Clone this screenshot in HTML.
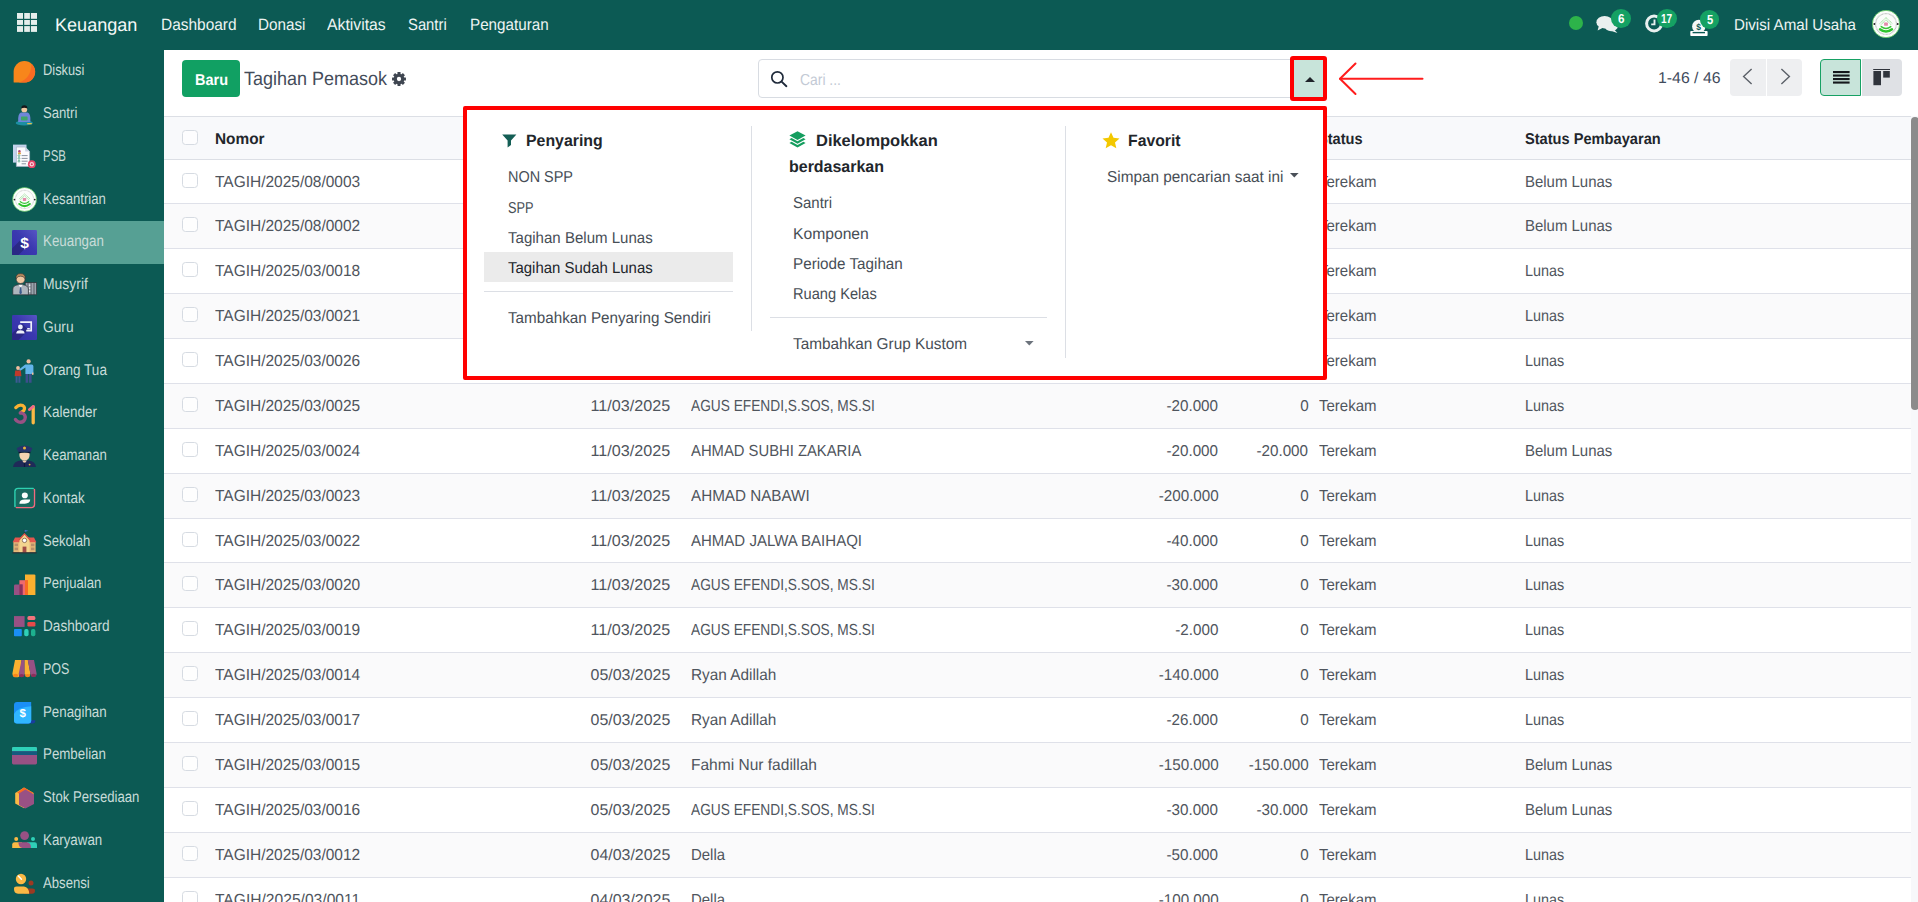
<!DOCTYPE html>
<html lang="id">
<head>
<meta charset="utf-8">
<title>Tagihan Pemasok</title>
<style>
*{box-sizing:border-box;margin:0;padding:0}
html,body{width:1918px;height:902px;overflow:hidden;background:#fff}
body{font-family:"Liberation Sans",sans-serif;font-size:15px;color:#4a5058;position:relative}
.a,.t,svg{position:absolute}
.t{white-space:nowrap;line-height:24px;text-rendering:geometricPrecision}
.badge{position:absolute;width:19.7px;height:18.7px;border-radius:50%;background:#15a163}
.cb{position:absolute;left:182.2px;width:15.8px;height:14.8px;border:1px solid #d6dbe2;border-radius:3.5px;background:rgba(255,255,255,.7)}
.r{position:absolute;left:164px;width:1747px;height:44.875px;border-bottom:1px solid #dfe1e9}
.r.g{background:#fafafb}
.vl{position:absolute;width:1px;background:#dcdfe5}
.hl{position:absolute;height:1px;background:#dcdfe5}
.sv{left:12px;width:25px;height:25px;overflow:visible}
</style>
</head>
<body>
<div class="a" id="nav" style="left:0;top:0;width:1918px;height:50px;background:#0c5a54"></div>
<svg style="left:17.3px;top:13.1px" width="21" height="19" viewBox="0 0 21 19"><g fill="#e6eeec"><rect x="0" y="0" width="6.0" height="5.8"/><rect x="7.2" y="0" width="5.7" height="5.8"/><rect x="13.9" y="0" width="6.1" height="5.8"/><rect x="0" y="7.0" width="6.0" height="4.9"/><rect x="7.2" y="7.0" width="5.7" height="4.9"/><rect x="13.9" y="7.0" width="6.1" height="4.9"/><rect x="0" y="13.1" width="6.0" height="5.8"/><rect x="7.2" y="13.1" width="5.7" height="5.8"/><rect x="13.9" y="13.1" width="6.1" height="5.8"/></g></svg>
<div class="t" style="left:54.90px;top:13.00px;font-size:18.26px;color:#f4f8f7;transform:scaleX(0.9900);transform-origin:0 50%;">Keuangan</div>
<div class="t" style="left:160.60px;top:13.00px;font-size:16.38px;color:#eef4f3;transform:scaleX(0.9444);transform-origin:0 50%;">Dashboard</div>
<div class="t" style="left:258.30px;top:13.00px;font-size:16.38px;color:#eef4f3;transform:scaleX(0.9325);transform-origin:0 50%;">Donasi</div>
<div class="t" style="left:327.30px;top:13.00px;font-size:16.38px;color:#eef4f3;transform:scaleX(0.9635);transform-origin:0 50%;">Aktivitas</div>
<div class="t" style="left:408.30px;top:13.00px;font-size:16.38px;color:#eef4f3;transform:scaleX(0.9053);transform-origin:0 50%;">Santri</div>
<div class="t" style="left:470.30px;top:13.00px;font-size:16.38px;color:#eef4f3;transform:scaleX(0.9303);transform-origin:0 50%;">Pengaturan</div>
<div class="a" style="left:1569px;top:16px;width:14px;height:14px;border-radius:7px;background:#2db34a"></div>
<svg style="left:1596px;top:15px" width="23" height="19" viewBox="0 0 23 19"><g fill="#e9f0ef"><ellipse cx="8.6" cy="7.2" rx="8.2" ry="6.2"/><path d="M3 10.5 L1.6 15.6 L7.4 12.6 Z"/><ellipse cx="15.2" cy="11.6" rx="6.6" ry="4.6"/><path d="M18.2 14.6 L21.4 18 L15.4 15.9 Z"/></g></svg>
<div class="badge" style="left:1611.1px;top:9.4px"></div>
<div class="t" style="left:1617.50px;top:7.00px;font-size:13.04px;font-weight:700;color:#fff;transform:scaleX(0.8966);transform-origin:0 50%;">6</div>
<svg style="left:1645.3px;top:14px" width="19" height="19" viewBox="0 0 19 19"><circle cx="9.1" cy="9.5" r="7.5" fill="none" stroke="#e9f0ef" stroke-width="3"/><path d="M9.5 5.4 V10.4 H6.2" fill="none" stroke="#e9f0ef" stroke-width="1.9"/></svg>
<div class="badge" style="left:1657.3px;top:9.4px"></div>
<div class="t" style="left:1661.00px;top:7.00px;font-size:13.04px;font-weight:700;color:#fff;transform:scaleX(0.7724);transform-origin:0 50%;">17</div>
<svg style="left:1690px;top:19px" width="18" height="18" viewBox="0 0 18 18"><circle cx="8.8" cy="7.4" r="6.7" fill="#f4f8f7"/><rect x="0.3" y="12" width="17.3" height="5" rx="0.8" fill="#ffffff"/><rect x="2.6" y="12.9" width="12.4" height="1.4" fill="#0c5a54"/><text x="8.6" y="10.6" font-family="Liberation Sans" font-size="8.5" font-weight="700" fill="#0c5a54" text-anchor="middle">$</text></svg>
<div class="badge" style="left:1699.8px;top:10.2px"></div>
<div class="t" style="left:1706.60px;top:8.00px;font-size:13.04px;font-weight:700;color:#fff;transform:scaleX(0.8552);transform-origin:0 50%;">5</div>
<div class="t" style="left:1734.40px;top:14.00px;font-size:15.80px;color:#eef4f3;transform:scaleX(0.9584);transform-origin:0 50%;">Divisi Amal Usaha</div>
<svg style="left:1871.6px;top:9.8px" width="28" height="28" viewBox="0 0 28 28"><circle cx="14" cy="14" r="13.7" fill="#fbfdfb" stroke="#43bf43" stroke-width="0.7"/><circle cx="14" cy="14" r="10.4" fill="none" stroke="#bfc3c3" stroke-width="1.3" stroke-dasharray="0.9 0.5"/><path d="M7.6 13.6 L14 7.6 L20.4 13.6" fill="none" stroke="#7ed67e" stroke-width="0.9" stroke-dasharray="1.2 0.6"/><path d="M8.6 15 L14 9.8 L19.4 15" fill="none" stroke="#7ed67e" stroke-width="0.9" stroke-dasharray="1.2 0.6"/><rect x="12.1" y="12.4" width="3.8" height="3.4" rx="0.5" fill="#e48bab"/><path d="M9.2 16.6 Q14 20.4 18.8 16.6" fill="none" stroke="#36c636" stroke-width="1.5" stroke-linecap="round"/><path d="M8 19.2 Q14 24 20 19.2" fill="none" stroke="#2ec42e" stroke-width="2.4" stroke-linecap="round"/><circle cx="2.4" cy="14.1" r="1" fill="#222"/><circle cx="25.7" cy="14.1" r="1" fill="#222"/></svg>
<div class="a" id="side" style="left:0;top:50px;width:164px;height:852px;background:#0c5a54"></div>
<svg class="sv" style="top:59px" viewBox="0 0 25 25"><g transform="translate(0,0.6)"><path d="M1.6 22.4 V12.2 A10.8 10.8 0 1 1 12.4 23 H2.2 Q1.6 23 1.6 22.4Z" fill="#f8861b"/><path d="M19.5 4.2 A10.8 10.8 0 0 1 12.4 23 H6.5 Q19 19.5 19.5 4.2Z" fill="#f96b22"/></g></svg>
<div class="t" style="left:42.80px;top:59.00px;font-size:15.65px;color:#c9dcd9;transform:scaleX(0.8213);transform-origin:0 50%;">Diskusi</div>
<svg class="sv" style="top:101px" viewBox="0 0 25 25"><ellipse cx="12.3" cy="22" rx="8.6" ry="2.6" fill="#1d8fa3"/><path d="M6.2 21 Q5.6 12.6 9 11.4 H15.6 Q19 12.6 18.4 21 Z" fill="#6f86d9"/><circle cx="12.3" cy="8.4" r="2.9" fill="#f0c8a0"/><path d="M9.2 7.6 Q9.2 4.2 12.3 4.2 Q15.4 4.2 15.4 7.6 Q12.3 5.8 9.2 7.6Z" fill="#15171a"/><rect x="9" y="15.4" width="6.6" height="4" rx="0.6" fill="#3fa56a"/><rect x="15.2" y="22" width="4.6" height="1.3" fill="#e3c24a"/></svg>
<div class="t" style="left:42.80px;top:102.00px;font-size:15.65px;color:#c9dcd9;transform:scaleX(0.8395);transform-origin:0 50%;">Santri</div>
<svg class="sv" style="top:144px" viewBox="0 0 25 25"><rect x="1" y="0.6" width="13.5" height="18" fill="#c4d3ec"/><path d="M4.4 3 H13.2 L17.6 7.4 V22.4 H4.4Z" fill="#fbfbfe" stroke="#a9b3c9" stroke-width="0.7"/><path d="M13.2 3 V7.4 H17.6Z" fill="#c9d2e4"/><circle cx="7.4" cy="7.4" r="1.3" fill="#b24a7a"/><rect x="6" y="8.6" width="2.9" height="1.6" fill="#e0a33b"/><g stroke="#6d7688" stroke-width="0.8"><path d="M9.6 11.6H15.6M9.6 14.4H15.6M9.6 17.2H15.6M9.6 19.8H14"/></g><g fill="none" stroke="#3f9a77" stroke-width="0.7"><circle cx="7" cy="11.6" r="0.9"/><circle cx="7" cy="14.4" r="0.9"/><circle cx="7" cy="17.2" r="0.9"/></g><circle cx="19.8" cy="20.2" r="3.9" fill="#e8476a"/><circle cx="19.8" cy="20.2" r="2.2" fill="#f7d3da"/><circle cx="19.8" cy="20.2" r="1" fill="#d63a5e"/></svg>
<div class="t" style="left:42.80px;top:145.00px;font-size:15.65px;color:#c9dcd9;transform:scaleX(0.7317);transform-origin:0 50%;">PSB</div>
<svg class="sv" style="top:187px" viewBox="0 0 25 25"><g transform="translate(0.3,0.2) scale(0.875)"><circle cx="14" cy="14" r="13.7" fill="#fbfdfb" stroke="#43bf43" stroke-width="0.7"/><circle cx="14" cy="14" r="10.4" fill="none" stroke="#b4b8b8" stroke-width="0.9" stroke-dasharray="0.9 0.7"/><path d="M7.6 13.6 L14 7.6 L20.4 13.6" fill="none" stroke="#7ed67e" stroke-width="0.9" stroke-dasharray="1.2 0.6"/><path d="M8.6 15 L14 9.8 L19.4 15" fill="none" stroke="#7ed67e" stroke-width="0.9" stroke-dasharray="1.2 0.6"/><rect x="12.1" y="12.4" width="3.8" height="3.4" rx="0.5" fill="#e48bab"/><path d="M9.2 16.6 Q14 20.4 18.8 16.6" fill="none" stroke="#36c636" stroke-width="1.5" stroke-linecap="round"/><path d="M8 19.2 Q14 24 20 19.2" fill="none" stroke="#2ec42e" stroke-width="2.4" stroke-linecap="round"/><circle cx="2.4" cy="14.1" r="1" fill="#222"/><circle cx="25.7" cy="14.1" r="1" fill="#222"/></g></svg>
<div class="t" style="left:42.80px;top:188.00px;font-size:15.65px;color:#c9dcd9;transform:scaleX(0.8411);transform-origin:0 50%;">Kesantrian</div>
<div class="a" style="left:0;top:221px;width:164px;height:42.75px;background:#56a094"></div>
<svg class="sv" style="top:230px" viewBox="0 0 25 25"><defs><linearGradient id="pg" x1="0" y1="1" x2="1" y2="0"><stop offset="0" stop-color="#322fa6"/><stop offset="0.55" stop-color="#3b39b0"/><stop offset="1" stop-color="#5755c4"/></linearGradient></defs><rect x="0" y="0" width="25" height="25" rx="1.2" fill="url(#pg)"/><path d="M0 25 V18.5 L10 8.5 L16.5 15 L6.5 25Z" fill="#29277f" opacity=".85"/><text x="12.6" y="18.2" font-family="Liberation Sans" font-size="15.5" font-weight="700" fill="#fff" text-anchor="middle">$</text></svg>
<div class="t" style="left:42.80px;top:230.00px;font-size:15.65px;color:#c9dcd9;transform:scaleX(0.8538);transform-origin:0 50%;">Keuangan</div>
<svg class="sv" style="top:272px" viewBox="0 0 25 25"><rect x="13.2" y="10.6" width="11.4" height="12.2" fill="#9aa3ad" stroke="#2b3036" stroke-width="0.7"/><g stroke="#2b3036" stroke-width="0.6"><path d="M16 10.6V22.8M19 10.6V22.8M22 10.6V22.8"/></g><g fill="#e9edf1"><rect x="16.8" y="12.4" width="1.5" height="1.8"/><rect x="16.8" y="15.4" width="1.5" height="1.8"/><rect x="16.8" y="18.4" width="1.5" height="1.8"/></g><path d="M0.8 22.8 V17 Q1.2 13.4 6 12.8 H11.2 Q16 13.4 16.4 17 V22.8Z" fill="#aeb6be" stroke="#2b3036" stroke-width="0.7"/><path d="M6.4 12.8 L8.6 16 L10.8 12.8Z" fill="#f4f6f8"/><path d="M8 15.2 H9.2 L9.9 21 L8.6 22.6 L7.3 21Z" fill="#3b5b8c"/><circle cx="8.6" cy="7" r="4.5" fill="#f0c9a2" stroke="#2b3036" stroke-width="0.7"/><path d="M3.9 6.8 Q3.6 1.6 8.6 1.6 Q13.6 1.6 13.3 6.8 Q11 3.8 8.6 4.2 Q6.2 3.8 3.9 6.8Z" fill="#b98b5c" stroke="#2b3036" stroke-width="0.6"/></svg>
<div class="t" style="left:42.80px;top:273.00px;font-size:15.65px;color:#c9dcd9;transform:scaleX(0.8908);transform-origin:0 50%;">Musyrif</div>
<svg class="sv" style="top:315px" viewBox="0 0 25 25"><defs><linearGradient id="pg" x1="0" y1="1" x2="1" y2="0"><stop offset="0" stop-color="#322fa6"/><stop offset="0.55" stop-color="#3b39b0"/><stop offset="1" stop-color="#5755c4"/></linearGradient></defs><rect x="0" y="0" width="25" height="25" rx="1.2" fill="url(#pg)"/><path d="M0 25 V18.5 L10 8.5 L16.5 15 L6.5 25Z" fill="#29277f" opacity=".85"/><path d="M8.2 7.2 H19.2 V15.6 H14.2" fill="none" stroke="#eef0fb" stroke-width="1.7"/><rect x="15.2" y="13" width="2.6" height="1.5" fill="#eef0fb"/><circle cx="8.4" cy="12" r="2.4" fill="#eef0fb"/><path d="M4.2 18.6 Q4.2 15.2 8.4 15.2 Q12.6 15.2 12.6 18.6Z" fill="#eef0fb"/></svg>
<div class="t" style="left:42.80px;top:316.00px;font-size:15.65px;color:#c9dcd9;transform:scaleX(0.8798);transform-origin:0 50%;">Guru</div>
<svg class="sv" style="top:358px" viewBox="0 0 25 25"><circle cx="16.6" cy="3.4" r="2.1" fill="#f2bfa0"/><path d="M13.4 6.4 H19.8 Q21.4 6.4 21.4 8.2 V15.4 H19.8 V9.4 V16 H13.4 V9.6 L8 13 L7 11.6 L12.6 7 Q13 6.4 13.4 6.4Z" fill="#63b5ea"/><rect x="20" y="14.6" width="1.5" height="2.2" fill="#f2bfa0"/><path d="M13.6 16 H16.2 V24.8 H13.6Z M17 16 H19.6 V24.8 H17Z" fill="#3d4e8c"/><circle cx="6" cy="10" r="1.9" fill="#f2bfa0"/><path d="M3.2 12.6 H8.8 L9.4 18.2 H2.6Z" fill="#c0392b"/><path d="M3.6 18.2 H5.6 V24.8 H3.6Z M6.4 18.2 H8.4 V24.8 H6.4Z" fill="#3d5a94"/></svg>
<div class="t" style="left:42.80px;top:359.00px;font-size:15.65px;color:#c9dcd9;transform:scaleX(0.8646);transform-origin:0 50%;">Orang Tua</div>
<svg class="sv" style="top:401px" viewBox="0 0 25 25"><g transform="translate(1.6,0.4)"><path d="M2.2 6.2 Q5.6 2.6 9.2 4.2 Q12.2 6 10 9.4 L7.6 11" fill="none" stroke="#fab133" stroke-width="3.3" stroke-linecap="round"/><path d="M6.6 11.6 H8 Q12.6 13 11.4 17.4 Q9.6 21.8 5 20.6 Q2.8 19.8 1.8 18" fill="none" stroke="#985184" stroke-width="3.3" stroke-linecap="round"/><path d="M19.6 5.4 V21.4" stroke="#fbb945" stroke-width="3.3" stroke-linecap="round"/><path d="M19.8 5 L15.8 8.2" stroke="#f06a88" stroke-width="2.8" stroke-linecap="round"/></g></svg>
<div class="t" style="left:42.80px;top:401.00px;font-size:15.65px;color:#c9dcd9;transform:scaleX(0.8609);transform-origin:0 50%;">Kalender</div>
<svg class="sv" style="top:443px" viewBox="0 0 25 25"><path d="M1 24 Q1.6 18.6 8.4 17.6 H16.6 Q23.4 18.6 24 24Z" fill="#1f2a58"/><path d="M10 17.4 L12.5 20.4 L15 17.4Z" fill="#f3d2b0"/><rect x="11.9" y="19.6" width="1.2" height="4.4" fill="#101a3c"/><circle cx="17.6" cy="21.6" r="0.9" fill="#e8b63a"/><path d="M7.4 9.6 H17.6 V12 Q17.6 17.4 12.5 17.4 Q7.4 17.4 7.4 12Z" fill="#f3d2b0"/><path d="M6.4 8.4 H18.6 L18.2 10.4 Q12.5 8.8 6.8 10.4Z" fill="#0f1430"/><path d="M4.6 5.2 Q12.5 -0.2 20.4 5.2 L18.8 8.8 H6.2Z" fill="#26336b"/><circle cx="12.5" cy="5" r="1.5" fill="#e8b63a"/></svg>
<div class="t" style="left:42.80px;top:444.00px;font-size:15.65px;color:#c9dcd9;transform:scaleX(0.8446);transform-origin:0 50%;">Keamanan</div>
<svg class="sv" style="top:486px" viewBox="0 0 25 25"><g transform="translate(-0.2,-0.2) scale(1,0.94)"><path d="M3.2 22 V6 Q3.2 2.8 6.4 2.8 H21.4" fill="none" stroke="#2fd0b0" stroke-width="1.6" stroke-linecap="round"/><path d="M22.6 4 V20 Q22.6 23.2 19.4 23.2 H4.6" fill="none" stroke="#f06a7e" stroke-width="1.6" stroke-linecap="round"/><rect x="4" y="3.6" width="17.8" height="18.8" rx="2.2" fill="#17695f"/><circle cx="13" cy="10.2" r="3" fill="#fafdfc"/><path d="M7.6 19 Q7.6 14.6 13 14.6 H18.4 Q18.4 19 13 19Z" fill="#fafdfc"/></g></svg>
<div class="t" style="left:42.80px;top:487.00px;font-size:15.65px;color:#c9dcd9;transform:scaleX(0.8542);transform-origin:0 50%;">Kontak</div>
<svg class="sv" style="top:529px" viewBox="0 0 25 25"><path d="M12.4 0.6 V5" stroke="#2b2f33" stroke-width="0.7"/><path d="M12.6 0.8 L16.4 1.8 L12.6 2.9Z" fill="#3d76c4"/><rect x="1.4" y="13" width="22.2" height="10.6" fill="#e8b878"/><path d="M0.6 13.2 L3 8.4 H22 L24.4 13.2Z" fill="#e4574e"/><path d="M7.4 23.6 V10 L12.5 4.6 L17.6 10 V23.6Z" fill="#f3d58f"/><path d="M6.4 10.6 L12.5 4 L18.6 10.6 L17.6 11.4 L12.5 5.8 L7.4 11.4Z" fill="#d84c46"/><circle cx="12.5" cy="11.4" r="2.2" fill="#fff" stroke="#6b4a3a" stroke-width="0.7"/><rect x="10.6" y="17.6" width="3.8" height="6" fill="#a14d46"/><g fill="#b98f6a"><rect x="2.6" y="14.6" width="3.4" height="2.6"/><rect x="2.6" y="18.6" width="3.4" height="2.6"/><rect x="19" y="14.6" width="3.4" height="2.6"/><rect x="19" y="18.6" width="3.4" height="2.6"/></g><rect x="0.4" y="23.2" width="24.2" height="1.2" fill="#2b2f33"/></svg>
<div class="t" style="left:42.80px;top:530.00px;font-size:15.65px;color:#c9dcd9;transform:scaleX(0.8367);transform-origin:0 50%;">Sekolah</div>
<svg class="sv" style="top:572px" viewBox="0 0 25 25"><path d="M13 2.4 H22.2 Q23.4 2.4 23.4 3.6 V23 H13Z" fill="#fbb130"/><path d="M7.4 8.2 H16 V23 H7.4Z" fill="#f0696c"/><path d="M13 8.2 H16 V23 H13Z" fill="#f96a22"/><path d="M2 13.8 Q2 12.4 3.4 12.4 H10.6 V23 H2Z" fill="#985184"/><path d="M7.4 12.4 H10.6 V23 H7.4Z" fill="#8d2f5a"/></svg>
<div class="t" style="left:42.80px;top:572.00px;font-size:15.65px;color:#c9dcd9;transform:scaleX(0.8379);transform-origin:0 50%;">Penjualan</div>
<svg class="sv" style="top:614px" viewBox="0 0 25 25"><g transform="translate(0,-1.3)"><rect x="2" y="3.4" width="10.6" height="10.8" fill="#985184"/><rect x="15.4" y="3.4" width="8" height="4" rx="1.6" fill="#f2747c"/><rect x="15.4" y="9.4" width="8" height="4.4" rx="1.2" fill="#e84a4a"/><rect x="2" y="16.4" width="7.8" height="7.2" rx="0.8" fill="#1a8ff5"/><rect x="12.2" y="16.4" width="4.4" height="7.2" rx="1.8" fill="#2fd0b8"/><rect x="19" y="16.4" width="4.4" height="7.2" rx="1.8" fill="#1db08f"/></g></svg>
<div class="t" style="left:42.80px;top:615.00px;font-size:15.65px;color:#c9dcd9;transform:scaleX(0.8704);transform-origin:0 50%;">Dashboard</div>
<svg class="sv" style="top:657px" viewBox="0 0 25 25"><path d="M3 3 H9.6 L8.2 16.4 A3.1 3.1 0 0 1 0.4 16.4Z" fill="#fbb130"/><path d="M9.6 3 H12.7 V16.8 A3 3 0 0 1 6.7 16.8Z" fill="#985184"/><path d="M12.7 3 H15.8 L18.4 16.8 A3 3 0 0 1 12.7 16.8Z" fill="#fbb130"/><path d="M15.8 3 H22 L24.6 16.4 A3.1 3.1 0 0 1 18.4 16.8Z" fill="#985184"/><ellipse cx="3.6" cy="18.4" rx="2.6" ry="1.6" fill="#f9851b"/><ellipse cx="15.6" cy="18.6" rx="2.6" ry="1.6" fill="#f9851b"/><ellipse cx="9.6" cy="18.6" rx="2.6" ry="1.6" fill="#8d2f5a"/><ellipse cx="21.6" cy="18.4" rx="2.6" ry="1.6" fill="#8d2f5a"/></svg>
<div class="t" style="left:42.80px;top:658.00px;font-size:15.65px;color:#c9dcd9;transform:scaleX(0.7992);transform-origin:0 50%;">POS</div>
<svg class="sv" style="top:700px" viewBox="0 0 25 25"><path d="M9 20.2 H23.4 Q23.4 23.4 20.4 23.4 H9Z" fill="#1a3c9e"/><path d="M2 5 Q2 2 5 2 H19.2 V20.4 Q19.2 23.4 16.2 23.4 H5 Q2 23.4 2 20.4Z" fill="#1a8ff5"/><path d="M2 14 Q6 6.6 19.2 6.2 V20.4 Q19.2 23.4 16.2 23.4 H5 Q2 23.4 2 20.4Z" fill="#30b6ff"/><text x="10.6" y="17.2" font-family="Liberation Sans" font-size="11.5" font-weight="700" fill="#fff" text-anchor="middle">$</text></svg>
<div class="t" style="left:42.80px;top:701.00px;font-size:15.65px;color:#c9dcd9;transform:scaleX(0.8501);transform-origin:0 50%;">Penagihan</div>
<svg class="sv" style="top:743px" viewBox="0 0 25 25"><rect x="0" y="4" width="25" height="17.4" rx="1.4" fill="#985184"/><path d="M0 5.4 Q0 4 1.4 4 H23.6 Q25 4 25 5.4 V8.2 H0Z" fill="#2fd0b8"/><rect x="0" y="8.2" width="25" height="3.8" fill="#155a7e"/></svg>
<div class="t" style="left:42.80px;top:743.00px;font-size:15.65px;color:#c9dcd9;transform:scaleX(0.8511);transform-origin:0 50%;">Pembelian</div>
<svg class="sv" style="top:785px" viewBox="0 0 25 25"><path d="M12 2.6 L21.6 8 V18.4 L12 23.2 L3.2 18.4 V8Z" fill="#fbb945"/><path d="M12 2.6 L21.6 8 L13.4 12.4 L5.2 7.4Z" fill="#f96a22"/><path d="M7 8.4 L13.4 4.6 L22 9.4 V19 L13.4 23.6 L7 20Z" fill="#985184"/></svg>
<div class="t" style="left:42.80px;top:786.00px;font-size:15.65px;color:#c9dcd9;transform:scaleX(0.8390);transform-origin:0 50%;">Stok Persediaan</div>
<svg class="sv" style="top:828px" viewBox="0 0 25 25"><g transform="translate(0,-2.6)"><circle cx="4.2" cy="13.6" r="2" fill="#fbb945"/><circle cx="21" cy="13.6" r="2" fill="#2fd0b8"/><path d="M0.2 19.2 Q0.2 16.8 2.6 16.8 H10 V22.6 H0.2Z" fill="#fbb945"/><path d="M15 16.8 H22.6 Q25 16.8 25 19.2 V22.6 H15Z" fill="#2fd0b8"/><circle cx="12.6" cy="10.2" r="4.4" fill="#985184"/><path d="M6.4 16.8 H15.4 Q19 17.6 19 22.6 H10.4 Q6.4 21.8 6.4 16.8Z" fill="#985184"/></g></svg>
<div class="t" style="left:42.80px;top:829.00px;font-size:15.65px;color:#c9dcd9;transform:scaleX(0.8510);transform-origin:0 50%;">Karyawan</div>
<svg class="sv" style="top:871px" viewBox="0 0 25 25"><g transform="translate(0,-3.6)"><circle cx="9" cy="11.6" r="5.2" fill="#fbb945"/><path d="M6.4 8.6 L9.4 11.8" stroke="#fff" stroke-width="1.5" stroke-linecap="round"/><circle cx="19" cy="15.6" r="2.5" fill="#9c3a22"/><path d="M12 21 H20.4 Q23 21 23 23.4 Q23 26.4 20 26.4 H12Z" fill="#9c3a22"/><path d="M2 21.6 Q2 19.2 4.6 19.2 H12 Q17 20 17.2 26.4 H6 Q2 26 2 21.6Z" fill="#fbb945"/></g></svg>
<div class="t" style="left:42.80px;top:872.00px;font-size:15.65px;color:#c9dcd9;transform:scaleX(0.8409);transform-origin:0 50%;">Absensi</div>
<div class="a" style="left:182px;top:60px;width:58px;height:37px;border-radius:4px;background:#11a063"></div>
<div class="t" style="left:194.60px;top:69.00px;font-size:15.65px;font-weight:700;color:#fff;transform:scaleX(0.9259);transform-origin:0 50%;">Baru</div>
<div class="t" style="left:244.10px;top:68.00px;font-size:19.28px;color:#444c5a;transform:scaleX(0.9337);transform-origin:0 50%;">Tagihan Pemasok</div>
<svg style="left:392.1px;top:72.1px" width="14" height="14" viewBox="0 0 14 14"><g fill="#3f4651"><circle cx="7" cy="7" r="5.3"/><rect x="5.45" y="0.05" width="3.1" height="13.9" rx="0.4" transform="rotate(0 7 7)"/><rect x="5.45" y="0.05" width="3.1" height="13.9" rx="0.4" transform="rotate(45 7 7)"/><rect x="5.45" y="0.05" width="3.1" height="13.9" rx="0.4" transform="rotate(90 7 7)"/><rect x="5.45" y="0.05" width="3.1" height="13.9" rx="0.4" transform="rotate(135 7 7)"/></g><circle cx="7" cy="7" r="2.15" fill="#fff"/></svg>
<div class="a" style="left:758px;top:59px;width:540px;height:39px;border:1px solid #d8dce2;border-radius:4px;background:#fff"></div>
<svg style="left:770px;top:70px" width="18" height="18" viewBox="0 0 18 18"><circle cx="7.4" cy="7.4" r="5.6" fill="none" stroke="#1f2a3a" stroke-width="1.7"/><path d="M11.6 11.6 L16.4 16.2" stroke="#1f2a3a" stroke-width="1.9" stroke-linecap="round"/></svg>
<div class="t" style="left:800.30px;top:69.00px;font-size:15.94px;color:#c3cad5;transform:scaleX(0.8714);transform-origin:0 50%;">Cari ...</div>
<div class="a" style="left:1290px;top:56px;width:37px;height:45px;border:4px solid #ff0000;border-radius:3px;background:#c8e4da"></div>
<svg style="left:1304.5px;top:77px" width="10" height="5" viewBox="0 0 10 5"><path d="M0 5 L5 0 L10 5Z" fill="#1f2329"/></svg>
<svg style="left:1334px;top:58px" width="96" height="42" viewBox="0 0 96 42"><g fill="none" stroke="#ff1c1c" stroke-width="2" stroke-linecap="round" stroke-linejoin="round"><path d="M6 20.7 H88.5"/><path d="M21.5 5.5 L6 20.7 L21.5 36"/></g></svg>
<div class="t" style="left:1658.30px;top:67.00px;font-size:15.65px;color:#414b5c;transform:scaleX(1.0121);transform-origin:0 50%;">1-46 / 46</div>
<div class="a" style="left:1730px;top:59px;width:36px;height:37px;background:#eeeff1;border-radius:4px 0 0 4px"></div>
<svg style="left:1742px;top:68px" width="11" height="17" viewBox="0 0 11 17"><path d="M9.6 1 L1.6 8.5 L9.6 16" fill="none" stroke="#5b6068" stroke-width="1.4"/></svg>
<div class="a" style="left:1767px;top:59px;width:35px;height:37px;background:#eeeff1;border-radius:0 4px 4px 0"></div>
<svg style="left:1779.5px;top:68px" width="11" height="17" viewBox="0 0 11 17"><path d="M1.4 1 L9.4 8.5 L1.4 16" fill="none" stroke="#5b6068" stroke-width="1.4"/></svg>
<div class="a" style="left:1819.5px;top:59px;width:41.5px;height:37px;background:#c8e4da;border:1px solid #17a164;border-radius:4px 0 0 4px"></div>
<svg style="left:1832.5px;top:70.5px" width="17" height="13" viewBox="0 0 17 13"><g fill="#15181c"><rect x="0" y="0" width="16.6" height="2.1"/><rect x="0" y="3.5" width="16.6" height="2.1"/><rect x="0" y="7" width="16.6" height="2.1"/><rect x="0" y="10.5" width="16.6" height="2.1"/></g></svg>
<div class="a" style="left:1862px;top:59px;width:40px;height:37px;background:#dfe1e5;border-radius:0 4px 4px 0"></div>
<svg style="left:1873px;top:68.5px" width="18" height="17" viewBox="0 0 18 17"><g fill="#30343c"><rect x="0.2" y="0" width="16.8" height="1"/><rect x="0.4" y="2" width="7.6" height="14.2"/><rect x="10.2" y="2" width="6.6" height="6.6"/></g></svg>
<div class="a" style="left:164px;top:116px;width:1747px;height:44px;background:#f8f9fb;border-top:1px solid #dcdfe5;border-bottom:1px solid #dcdfe5"></div>
<div class="cb" style="top:130px"></div>
<div class="t" style="left:215.30px;top:128.00px;font-size:15.65px;font-weight:700;color:#22262b;transform:scaleX(0.9840);transform-origin:0 50%;">Nomor</div>
<div class="t" style="left:1318.10px;top:128.00px;font-size:15.65px;font-weight:700;color:#22262b;transform:scaleX(0.9340);transform-origin:0 50%;">Status</div>
<div class="t" style="left:1524.50px;top:128.00px;font-size:15.65px;font-weight:700;color:#22262b;transform:scaleX(0.9347);transform-origin:0 50%;">Status Pembayaran</div>
<div class="r" style="top:160px;height:44px"></div>
<div class="cb" style="top:173px"></div>
<div class="t" style="left:215.00px;top:171.00px;font-size:16.01px;color:#4f555d;transform:scaleX(0.9678);transform-origin:0 50%;">TAGIH/2025/08/0003</div>
<div class="t" style="left:1319.20px;top:171.00px;font-size:16.01px;color:#4f555d;transform:scaleX(0.9371);transform-origin:0 50%;">Terekam</div>
<div class="t" style="left:1524.80px;top:171.00px;font-size:16.01px;color:#4f555d;transform:scaleX(0.9348);transform-origin:0 50%;">Belum Lunas</div>
<div class="r g" style="top:204px;height:45px"></div>
<div class="cb" style="top:217px"></div>
<div class="t" style="left:215.00px;top:215.00px;font-size:16.01px;color:#4f555d;transform:scaleX(0.9678);transform-origin:0 50%;">TAGIH/2025/08/0002</div>
<div class="t" style="left:1319.20px;top:215.00px;font-size:16.01px;color:#4f555d;transform:scaleX(0.9371);transform-origin:0 50%;">Terekam</div>
<div class="t" style="left:1524.80px;top:215.00px;font-size:16.01px;color:#4f555d;transform:scaleX(0.9348);transform-origin:0 50%;">Belum Lunas</div>
<div class="r" style="top:249px;height:45px"></div>
<div class="cb" style="top:262px"></div>
<div class="t" style="left:215.00px;top:260.00px;font-size:16.01px;color:#4f555d;transform:scaleX(0.9678);transform-origin:0 50%;">TAGIH/2025/03/0018</div>
<div class="t" style="left:1319.20px;top:260.00px;font-size:16.01px;color:#4f555d;transform:scaleX(0.9371);transform-origin:0 50%;">Terekam</div>
<div class="t" style="left:1524.80px;top:260.00px;font-size:16.01px;color:#4f555d;transform:scaleX(0.8992);transform-origin:0 50%;">Lunas</div>
<div class="r g" style="top:294px;height:45px"></div>
<div class="cb" style="top:307px"></div>
<div class="t" style="left:215.00px;top:305.00px;font-size:16.01px;color:#4f555d;transform:scaleX(0.9678);transform-origin:0 50%;">TAGIH/2025/03/0021</div>
<div class="t" style="left:1319.20px;top:305.00px;font-size:16.01px;color:#4f555d;transform:scaleX(0.9371);transform-origin:0 50%;">Terekam</div>
<div class="t" style="left:1524.80px;top:305.00px;font-size:16.01px;color:#4f555d;transform:scaleX(0.8992);transform-origin:0 50%;">Lunas</div>
<div class="r" style="top:339px;height:45px"></div>
<div class="cb" style="top:352px"></div>
<div class="t" style="left:215.00px;top:350.00px;font-size:16.01px;color:#4f555d;transform:scaleX(0.9678);transform-origin:0 50%;">TAGIH/2025/03/0026</div>
<div class="t" style="left:1319.20px;top:350.00px;font-size:16.01px;color:#4f555d;transform:scaleX(0.9371);transform-origin:0 50%;">Terekam</div>
<div class="t" style="left:1524.80px;top:350.00px;font-size:16.01px;color:#4f555d;transform:scaleX(0.8992);transform-origin:0 50%;">Lunas</div>
<div class="r g" style="top:384px;height:45px"></div>
<div class="cb" style="top:397px"></div>
<div class="t" style="left:215.00px;top:395.00px;font-size:16.01px;color:#4f555d;transform:scaleX(0.9678);transform-origin:0 50%;">TAGIH/2025/03/0025</div>
<div class="t" style="left:592.67px;top:395.00px;font-size:15.65px;color:#4f555d;transform:scaleX(1.0334);transform-origin:100% 50%;">11/03/2025</div>
<div class="t" style="left:690.50px;top:395.00px;font-size:16.01px;color:#4f555d;transform:scaleX(0.8573);transform-origin:0 50%;">AGUS EFENDI,S.SOS, MS.SI</div>
<div class="t" style="left:1165.25px;top:395.00px;font-size:15.65px;color:#4f555d;transform:scaleX(0.9730);transform-origin:100% 50%;">-20.000</div>
<div class="t" style="left:1299.80px;top:395.00px;font-size:15.65px;color:#4f555d;transform:scaleX(0.9730);transform-origin:100% 50%;">0</div>
<div class="t" style="left:1319.20px;top:395.00px;font-size:16.01px;color:#4f555d;transform:scaleX(0.9371);transform-origin:0 50%;">Terekam</div>
<div class="t" style="left:1524.80px;top:395.00px;font-size:16.01px;color:#4f555d;transform:scaleX(0.8992);transform-origin:0 50%;">Lunas</div>
<div class="r" style="top:429px;height:45px"></div>
<div class="cb" style="top:442px"></div>
<div class="t" style="left:215.00px;top:440.00px;font-size:16.01px;color:#4f555d;transform:scaleX(0.9678);transform-origin:0 50%;">TAGIH/2025/03/0024</div>
<div class="t" style="left:592.67px;top:440.00px;font-size:15.65px;color:#4f555d;transform:scaleX(1.0334);transform-origin:100% 50%;">11/03/2025</div>
<div class="t" style="left:690.50px;top:440.00px;font-size:16.01px;color:#4f555d;transform:scaleX(0.9254);transform-origin:0 50%;">AHMAD SUBHI ZAKARIA</div>
<div class="t" style="left:1165.25px;top:440.00px;font-size:15.65px;color:#4f555d;transform:scaleX(0.9730);transform-origin:100% 50%;">-20.000</div>
<div class="t" style="left:1255.45px;top:440.00px;font-size:15.65px;color:#4f555d;transform:scaleX(0.9730);transform-origin:100% 50%;">-20.000</div>
<div class="t" style="left:1319.20px;top:440.00px;font-size:16.01px;color:#4f555d;transform:scaleX(0.9371);transform-origin:0 50%;">Terekam</div>
<div class="t" style="left:1524.80px;top:440.00px;font-size:16.01px;color:#4f555d;transform:scaleX(0.9348);transform-origin:0 50%;">Belum Lunas</div>
<div class="r g" style="top:474px;height:45px"></div>
<div class="cb" style="top:487px"></div>
<div class="t" style="left:215.00px;top:485.00px;font-size:16.01px;color:#4f555d;transform:scaleX(0.9678);transform-origin:0 50%;">TAGIH/2025/03/0023</div>
<div class="t" style="left:592.67px;top:485.00px;font-size:15.65px;color:#4f555d;transform:scaleX(1.0334);transform-origin:100% 50%;">11/03/2025</div>
<div class="t" style="left:690.50px;top:485.00px;font-size:16.01px;color:#4f555d;transform:scaleX(0.9515);transform-origin:0 50%;">AHMAD NABAWI</div>
<div class="t" style="left:1156.55px;top:485.00px;font-size:15.65px;color:#4f555d;transform:scaleX(0.9730);transform-origin:100% 50%;">-200.000</div>
<div class="t" style="left:1299.80px;top:485.00px;font-size:15.65px;color:#4f555d;transform:scaleX(0.9730);transform-origin:100% 50%;">0</div>
<div class="t" style="left:1319.20px;top:485.00px;font-size:16.01px;color:#4f555d;transform:scaleX(0.9371);transform-origin:0 50%;">Terekam</div>
<div class="t" style="left:1524.80px;top:485.00px;font-size:16.01px;color:#4f555d;transform:scaleX(0.8992);transform-origin:0 50%;">Lunas</div>
<div class="r" style="top:519px;height:44px"></div>
<div class="cb" style="top:532px"></div>
<div class="t" style="left:215.00px;top:530.00px;font-size:16.01px;color:#4f555d;transform:scaleX(0.9678);transform-origin:0 50%;">TAGIH/2025/03/0022</div>
<div class="t" style="left:592.67px;top:530.00px;font-size:15.65px;color:#4f555d;transform:scaleX(1.0334);transform-origin:100% 50%;">11/03/2025</div>
<div class="t" style="left:690.50px;top:530.00px;font-size:16.01px;color:#4f555d;transform:scaleX(0.9382);transform-origin:0 50%;">AHMAD JALWA BAIHAQI</div>
<div class="t" style="left:1165.25px;top:530.00px;font-size:15.65px;color:#4f555d;transform:scaleX(0.9730);transform-origin:100% 50%;">-40.000</div>
<div class="t" style="left:1299.80px;top:530.00px;font-size:15.65px;color:#4f555d;transform:scaleX(0.9730);transform-origin:100% 50%;">0</div>
<div class="t" style="left:1319.20px;top:530.00px;font-size:16.01px;color:#4f555d;transform:scaleX(0.9371);transform-origin:0 50%;">Terekam</div>
<div class="t" style="left:1524.80px;top:530.00px;font-size:16.01px;color:#4f555d;transform:scaleX(0.8992);transform-origin:0 50%;">Lunas</div>
<div class="r g" style="top:563px;height:45px"></div>
<div class="cb" style="top:576px"></div>
<div class="t" style="left:215.00px;top:574.00px;font-size:16.01px;color:#4f555d;transform:scaleX(0.9678);transform-origin:0 50%;">TAGIH/2025/03/0020</div>
<div class="t" style="left:592.67px;top:574.00px;font-size:15.65px;color:#4f555d;transform:scaleX(1.0334);transform-origin:100% 50%;">11/03/2025</div>
<div class="t" style="left:690.50px;top:574.00px;font-size:16.01px;color:#4f555d;transform:scaleX(0.8573);transform-origin:0 50%;">AGUS EFENDI,S.SOS, MS.SI</div>
<div class="t" style="left:1165.25px;top:574.00px;font-size:15.65px;color:#4f555d;transform:scaleX(0.9730);transform-origin:100% 50%;">-30.000</div>
<div class="t" style="left:1299.80px;top:574.00px;font-size:15.65px;color:#4f555d;transform:scaleX(0.9730);transform-origin:100% 50%;">0</div>
<div class="t" style="left:1319.20px;top:574.00px;font-size:16.01px;color:#4f555d;transform:scaleX(0.9371);transform-origin:0 50%;">Terekam</div>
<div class="t" style="left:1524.80px;top:574.00px;font-size:16.01px;color:#4f555d;transform:scaleX(0.8992);transform-origin:0 50%;">Lunas</div>
<div class="r" style="top:608px;height:45px"></div>
<div class="cb" style="top:621px"></div>
<div class="t" style="left:215.00px;top:619.00px;font-size:16.01px;color:#4f555d;transform:scaleX(0.9678);transform-origin:0 50%;">TAGIH/2025/03/0019</div>
<div class="t" style="left:592.67px;top:619.00px;font-size:15.65px;color:#4f555d;transform:scaleX(1.0334);transform-origin:100% 50%;">11/03/2025</div>
<div class="t" style="left:690.50px;top:619.00px;font-size:16.01px;color:#4f555d;transform:scaleX(0.8573);transform-origin:0 50%;">AGUS EFENDI,S.SOS, MS.SI</div>
<div class="t" style="left:1173.94px;top:619.00px;font-size:15.65px;color:#4f555d;transform:scaleX(0.9730);transform-origin:100% 50%;">-2.000</div>
<div class="t" style="left:1299.80px;top:619.00px;font-size:15.65px;color:#4f555d;transform:scaleX(0.9730);transform-origin:100% 50%;">0</div>
<div class="t" style="left:1319.20px;top:619.00px;font-size:16.01px;color:#4f555d;transform:scaleX(0.9371);transform-origin:0 50%;">Terekam</div>
<div class="t" style="left:1524.80px;top:619.00px;font-size:16.01px;color:#4f555d;transform:scaleX(0.8992);transform-origin:0 50%;">Lunas</div>
<div class="r g" style="top:653px;height:45px"></div>
<div class="cb" style="top:666px"></div>
<div class="t" style="left:215.00px;top:664.00px;font-size:16.01px;color:#4f555d;transform:scaleX(0.9678);transform-origin:0 50%;">TAGIH/2025/03/0014</div>
<div class="t" style="left:591.52px;top:664.00px;font-size:15.65px;color:#4f555d;transform:scaleX(1.0181);transform-origin:100% 50%;">05/03/2025</div>
<div class="t" style="left:690.50px;top:664.00px;font-size:16.01px;color:#4f555d;transform:scaleX(0.9589);transform-origin:0 50%;">Ryan Adillah</div>
<div class="t" style="left:1156.55px;top:664.00px;font-size:15.65px;color:#4f555d;transform:scaleX(0.9730);transform-origin:100% 50%;">-140.000</div>
<div class="t" style="left:1299.80px;top:664.00px;font-size:15.65px;color:#4f555d;transform:scaleX(0.9730);transform-origin:100% 50%;">0</div>
<div class="t" style="left:1319.20px;top:664.00px;font-size:16.01px;color:#4f555d;transform:scaleX(0.9371);transform-origin:0 50%;">Terekam</div>
<div class="t" style="left:1524.80px;top:664.00px;font-size:16.01px;color:#4f555d;transform:scaleX(0.8992);transform-origin:0 50%;">Lunas</div>
<div class="r" style="top:698px;height:45px"></div>
<div class="cb" style="top:711px"></div>
<div class="t" style="left:215.00px;top:709.00px;font-size:16.01px;color:#4f555d;transform:scaleX(0.9678);transform-origin:0 50%;">TAGIH/2025/03/0017</div>
<div class="t" style="left:591.52px;top:709.00px;font-size:15.65px;color:#4f555d;transform:scaleX(1.0181);transform-origin:100% 50%;">05/03/2025</div>
<div class="t" style="left:690.50px;top:709.00px;font-size:16.01px;color:#4f555d;transform:scaleX(0.9589);transform-origin:0 50%;">Ryan Adillah</div>
<div class="t" style="left:1165.25px;top:709.00px;font-size:15.65px;color:#4f555d;transform:scaleX(0.9730);transform-origin:100% 50%;">-26.000</div>
<div class="t" style="left:1299.80px;top:709.00px;font-size:15.65px;color:#4f555d;transform:scaleX(0.9730);transform-origin:100% 50%;">0</div>
<div class="t" style="left:1319.20px;top:709.00px;font-size:16.01px;color:#4f555d;transform:scaleX(0.9371);transform-origin:0 50%;">Terekam</div>
<div class="t" style="left:1524.80px;top:709.00px;font-size:16.01px;color:#4f555d;transform:scaleX(0.8992);transform-origin:0 50%;">Lunas</div>
<div class="r g" style="top:743px;height:45px"></div>
<div class="cb" style="top:756px"></div>
<div class="t" style="left:215.00px;top:754.00px;font-size:16.01px;color:#4f555d;transform:scaleX(0.9678);transform-origin:0 50%;">TAGIH/2025/03/0015</div>
<div class="t" style="left:591.52px;top:754.00px;font-size:15.65px;color:#4f555d;transform:scaleX(1.0181);transform-origin:100% 50%;">05/03/2025</div>
<div class="t" style="left:690.50px;top:754.00px;font-size:16.01px;color:#4f555d;transform:scaleX(0.9705);transform-origin:0 50%;">Fahmi Nur fadillah</div>
<div class="t" style="left:1156.55px;top:754.00px;font-size:15.65px;color:#4f555d;transform:scaleX(0.9730);transform-origin:100% 50%;">-150.000</div>
<div class="t" style="left:1246.75px;top:754.00px;font-size:15.65px;color:#4f555d;transform:scaleX(0.9730);transform-origin:100% 50%;">-150.000</div>
<div class="t" style="left:1319.20px;top:754.00px;font-size:16.01px;color:#4f555d;transform:scaleX(0.9371);transform-origin:0 50%;">Terekam</div>
<div class="t" style="left:1524.80px;top:754.00px;font-size:16.01px;color:#4f555d;transform:scaleX(0.9348);transform-origin:0 50%;">Belum Lunas</div>
<div class="r" style="top:788px;height:45px"></div>
<div class="cb" style="top:801px"></div>
<div class="t" style="left:215.00px;top:799.00px;font-size:16.01px;color:#4f555d;transform:scaleX(0.9678);transform-origin:0 50%;">TAGIH/2025/03/0016</div>
<div class="t" style="left:591.52px;top:799.00px;font-size:15.65px;color:#4f555d;transform:scaleX(1.0181);transform-origin:100% 50%;">05/03/2025</div>
<div class="t" style="left:690.50px;top:799.00px;font-size:16.01px;color:#4f555d;transform:scaleX(0.8573);transform-origin:0 50%;">AGUS EFENDI,S.SOS, MS.SI</div>
<div class="t" style="left:1165.25px;top:799.00px;font-size:15.65px;color:#4f555d;transform:scaleX(0.9730);transform-origin:100% 50%;">-30.000</div>
<div class="t" style="left:1255.45px;top:799.00px;font-size:15.65px;color:#4f555d;transform:scaleX(0.9730);transform-origin:100% 50%;">-30.000</div>
<div class="t" style="left:1319.20px;top:799.00px;font-size:16.01px;color:#4f555d;transform:scaleX(0.9371);transform-origin:0 50%;">Terekam</div>
<div class="t" style="left:1524.80px;top:799.00px;font-size:16.01px;color:#4f555d;transform:scaleX(0.9348);transform-origin:0 50%;">Belum Lunas</div>
<div class="r g" style="top:833px;height:45px"></div>
<div class="cb" style="top:846px"></div>
<div class="t" style="left:215.00px;top:844.00px;font-size:16.01px;color:#4f555d;transform:scaleX(0.9678);transform-origin:0 50%;">TAGIH/2025/03/0012</div>
<div class="t" style="left:591.52px;top:844.00px;font-size:15.65px;color:#4f555d;transform:scaleX(1.0181);transform-origin:100% 50%;">04/03/2025</div>
<div class="t" style="left:690.50px;top:844.00px;font-size:16.01px;color:#4f555d;transform:scaleX(0.9323);transform-origin:0 50%;">Della</div>
<div class="t" style="left:1165.25px;top:844.00px;font-size:15.65px;color:#4f555d;transform:scaleX(0.9730);transform-origin:100% 50%;">-50.000</div>
<div class="t" style="left:1299.80px;top:844.00px;font-size:15.65px;color:#4f555d;transform:scaleX(0.9730);transform-origin:100% 50%;">0</div>
<div class="t" style="left:1319.20px;top:844.00px;font-size:16.01px;color:#4f555d;transform:scaleX(0.9371);transform-origin:0 50%;">Terekam</div>
<div class="t" style="left:1524.80px;top:844.00px;font-size:16.01px;color:#4f555d;transform:scaleX(0.8992);transform-origin:0 50%;">Lunas</div>
<div class="r" style="top:878px;height:44px"></div>
<div class="cb" style="top:891px"></div>
<div class="t" style="left:215.00px;top:889.00px;font-size:16.01px;color:#4f555d;transform:scaleX(0.9755);transform-origin:0 50%;">TAGIH/2025/03/0011</div>
<div class="t" style="left:591.52px;top:889.00px;font-size:15.65px;color:#4f555d;transform:scaleX(1.0181);transform-origin:100% 50%;">04/03/2025</div>
<div class="t" style="left:690.50px;top:889.00px;font-size:16.01px;color:#4f555d;transform:scaleX(0.9323);transform-origin:0 50%;">Della</div>
<div class="t" style="left:1156.55px;top:889.00px;font-size:15.65px;color:#4f555d;transform:scaleX(0.9730);transform-origin:100% 50%;">-100.000</div>
<div class="t" style="left:1299.80px;top:889.00px;font-size:15.65px;color:#4f555d;transform:scaleX(0.9730);transform-origin:100% 50%;">0</div>
<div class="t" style="left:1319.20px;top:889.00px;font-size:16.01px;color:#4f555d;transform:scaleX(0.9371);transform-origin:0 50%;">Terekam</div>
<div class="t" style="left:1524.80px;top:889.00px;font-size:16.01px;color:#4f555d;transform:scaleX(0.8992);transform-origin:0 50%;">Lunas</div>
<div class="a" style="left:1911px;top:116px;width:7px;height:786px;background:#f7f8fa"></div>
<div class="a" style="left:1911px;top:116.5px;width:8px;height:293.3px;background:#8b8b8b;border-radius:4px"></div>
<div class="a" style="left:463px;top:106px;width:864px;height:274px;border:4px solid #ff0000;border-radius:2px;background:#fff"></div>
<svg style="left:502px;top:133.5px" width="15" height="14" viewBox="0 0 15 14"><path d="M0.2 0.4 H14.4 L9 6.4 V11 L5.6 13.6 V6.4Z" fill="#145e55"/></svg>
<div class="t" style="left:525.80px;top:129.00px;font-size:16.38px;font-weight:700;color:#22262b;transform:scaleX(0.9695);transform-origin:0 50%;">Penyaring</div>
<div class="t" style="left:507.50px;top:166.00px;font-size:15.80px;color:#474e56;transform:scaleX(0.9141);transform-origin:0 50%;">NON SPP</div>
<div class="t" style="left:507.50px;top:197.00px;font-size:15.80px;color:#474e56;transform:scaleX(0.8067);transform-origin:0 50%;">SPP</div>
<div class="t" style="left:507.50px;top:227.00px;font-size:15.80px;color:#474e56;transform:scaleX(0.9524);transform-origin:0 50%;">Tagihan Belum Lunas</div>
<div class="a" style="left:484px;top:252px;width:249px;height:30px;background:#ebebeb"></div>
<div class="t" style="left:507.50px;top:257.00px;font-size:15.80px;color:#22262b;transform:scaleX(0.9467);transform-origin:0 50%;">Tagihan Sudah Lunas</div>
<div class="hl" style="left:484px;top:291px;width:249px"></div>
<div class="t" style="left:507.50px;top:307.00px;font-size:15.80px;color:#474e56;transform:scaleX(0.9632);transform-origin:0 50%;">Tambahkan Penyaring Sendiri</div>
<div class="vl" style="left:751px;top:126px;height:205px"></div>
<svg style="left:788.5px;top:130.5px" width="17" height="18" viewBox="0 0 17 18"><g fill="#159e5f"><path d="M8.5 0.2 L16.6 4.6 L8.5 9 L0.4 4.6Z"/><path d="M0.4 8.2 L2.6 7 L8.5 10.2 L14.4 7 L16.6 8.2 L8.5 12.8Z"/><path d="M0.4 12 L2.6 10.8 L8.5 14 L14.4 10.8 L16.6 12 L8.5 16.6Z"/></g></svg>
<div class="t" style="left:815.50px;top:129.00px;font-size:16.38px;font-weight:700;color:#22262b;transform:scaleX(1.0064);transform-origin:0 50%;">Dikelompokkan</div>
<div class="t" style="left:789.20px;top:155.00px;font-size:16.38px;font-weight:700;color:#22262b;transform:scaleX(0.9762);transform-origin:0 50%;">berdasarkan</div>
<div class="t" style="left:793.30px;top:192.00px;font-size:15.80px;color:#474e56;transform:scaleX(0.9496);transform-origin:0 50%;">Santri</div>
<div class="t" style="left:793.30px;top:223.00px;font-size:15.80px;color:#474e56;transform:scaleX(0.9919);transform-origin:0 50%;">Komponen</div>
<div class="t" style="left:793.30px;top:253.00px;font-size:15.80px;color:#474e56;transform:scaleX(0.9641);transform-origin:0 50%;">Periode Tagihan</div>
<div class="t" style="left:793.30px;top:283.00px;font-size:15.80px;color:#474e56;transform:scaleX(0.9263);transform-origin:0 50%;">Ruang Kelas</div>
<div class="hl" style="left:770px;top:317px;width:277px"></div>
<div class="t" style="left:793.30px;top:333.00px;font-size:15.80px;color:#474e56;transform:scaleX(0.9714);transform-origin:0 50%;">Tambahkan Grup Kustom</div>
<svg style="left:1025px;top:341px" width="9" height="5" viewBox="0 0 9 5"><path d="M0 0 H8.6 L4.3 4.4Z" fill="#6c737c"/></svg>
<div class="vl" style="left:1065px;top:126px;height:232px"></div>
<svg style="left:1101.5px;top:131.5px" width="18" height="17" viewBox="0 0 18 17"><path d="M9 0.3 L11.5 5.8 L17.5 6.4 L13 10.4 L14.3 16.3 L9 13.3 L3.7 16.3 L5 10.4 L0.5 6.4 L6.5 5.8Z" fill="#f3c800"/></svg>
<div class="t" style="left:1128.30px;top:129.00px;font-size:16.38px;font-weight:700;color:#22262b;transform:scaleX(0.9643);transform-origin:0 50%;">Favorit</div>
<div class="t" style="left:1107.40px;top:166.00px;font-size:15.80px;color:#474e56;transform:scaleX(0.9704);transform-origin:0 50%;">Simpan pencarian saat ini</div>
<svg style="left:1289.5px;top:173px" width="9" height="5" viewBox="0 0 9 5"><path d="M0 0 H8.6 L4.3 4.6Z" fill="#4a5058"/></svg>
</body>
</html>
